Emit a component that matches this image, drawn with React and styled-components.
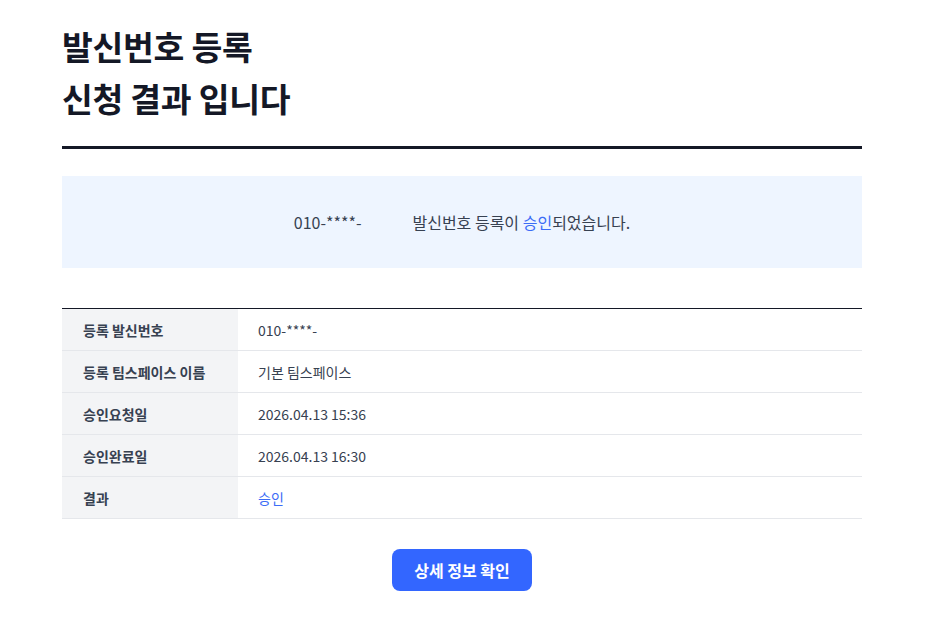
import React from "react";
import styled, { createGlobalStyle } from "styled-components";

const Global = createGlobalStyle`
  html, body { margin: 0; padding: 0; background: #ffffff; }
  body { font-family: "Noto Sans CJK KR", "Noto Sans", sans-serif; color: #1f2937; }
  * { box-sizing: border-box; }
`;

const Page = styled.div`
  width: 800px;
  margin-left: 62px;
  padding-top: 20px;
`;

const Title = styled.h1`
  margin: 0;
  font-size: 33.5px;
  line-height: 52px;
  font-weight: 700;
  color: #141826;
  letter-spacing: -0.3px;
`;

const Divider = styled.hr`
  margin: 22px 0 0;
  border: 0;
  height: 3px;
  background: #141826;
`;

const Banner = styled.div`
  margin-top: 27px;
  height: 92px;
  background: #eef5ff;
  display: flex;
  align-items: center;
  justify-content: center;
  gap: 51px;
  font-size: 16px;
  color: #374151;
`;

const Blue = styled.span`
  color: #3b6cf6;
`;

const Table = styled.div`
  margin-top: 40px;
  border-top: 1px solid #141826;
  display: grid;
  grid-template-columns: 176px 1fr;
`;

const Label = styled.div`
  height: 42px;
  display: flex;
  align-items: center;
  padding-left: 21px;
  background: #f3f4f6;
  border-bottom: 1px solid #e5e7eb;
  font-size: 14px;
  font-weight: 700;
  color: #374151;
`;

const Value = styled.div`
  height: 42px;
  display: flex;
  align-items: center;
  padding-left: 20px;
  border-bottom: 1px solid #e5e7eb;
  font-size: 14px;
  color: ${(p) => (p.$blue ? "#3b6cf6" : "#374151")};
`;

const Actions = styled.div`
  display: flex;
  justify-content: center;
  margin-top: 30px;
`;

const Button = styled.button`
  width: 140px;
  height: 42px;
  border: 0;
  border-radius: 8px;
  background: #3366ff;
  color: #ffffff;
  font-family: inherit;
  font-size: 16px;
  font-weight: 700;
  cursor: pointer;
`;

const rows = [
  ["등록 발신번호", "010-****-"],
  ["등록 팀스페이스 이름", "기본 팀스페이스"],
  ["승인요청일", "2026.04.13 15:36"],
  ["승인완료일", "2026.04.13 16:30"],
  ["결과", "승인", true],
];

export default function App() {
  return (
    <>
      <Global />
      <Page>
        <Title>
          발신번호 등록
          <br />
          신청 결과 입니다
        </Title>
        <Divider />
        <Banner>
          <span>010-****-</span>
          <span>
            발신번호 등록이 <Blue>승인</Blue>되었습니다.
          </span>
        </Banner>
        <Table>
          {rows.map(([l, v, b]) => (
            <React.Fragment key={l}>
              <Label>{l}</Label>
              <Value $blue={b}>{v}</Value>
            </React.Fragment>
          ))}
        </Table>
        <Actions>
          <Button>상세 정보 확인</Button>
        </Actions>
      </Page>
    </>
  );
}
